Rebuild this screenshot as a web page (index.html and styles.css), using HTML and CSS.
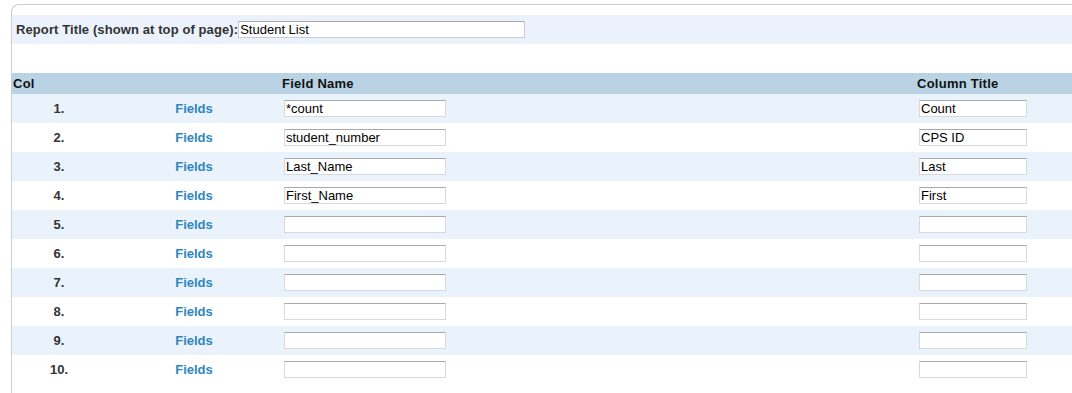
FILE: index.html
```html
<!DOCTYPE html>
<html>
<head>
<meta charset="utf-8">
<link rel="stylesheet" href="styles.css">
</head>
<body>
<div class="box">
  <div class="title-row">
    <span class="title-label">Report Title (shown at top of page):</span><input class="title-input" type="text" value="Student List">
  </div>
  <div class="spacer"></div>
  <div class="grid">
    <div class="row head">
      <div class="c1 hl">Col</div>
      <div class="c2"></div>
      <div class="c3">Field Name</div>
      <div class="c4">Column Title</div>
    </div>
    <div class="row odd"><div class="c1">1.</div><div class="c2"><a class="lnk">Fields</a></div><div class="c3"><input class="fin" value="*count"></div><div class="c4"><input class="tin" value="Count"></div></div>
    <div class="row"><div class="c1">2.</div><div class="c2"><a class="lnk">Fields</a></div><div class="c3"><input class="fin" value="student_number"></div><div class="c4"><input class="tin" value="CPS ID"></div></div>
    <div class="row odd"><div class="c1">3.</div><div class="c2"><a class="lnk">Fields</a></div><div class="c3"><input class="fin" value="Last_Name"></div><div class="c4"><input class="tin" value="Last"></div></div>
    <div class="row"><div class="c1">4.</div><div class="c2"><a class="lnk">Fields</a></div><div class="c3"><input class="fin" value="First_Name"></div><div class="c4"><input class="tin" value="First"></div></div>
    <div class="row odd"><div class="c1">5.</div><div class="c2"><a class="lnk">Fields</a></div><div class="c3"><input class="fin" value=""></div><div class="c4"><input class="tin" value=""></div></div>
    <div class="row"><div class="c1">6.</div><div class="c2"><a class="lnk">Fields</a></div><div class="c3"><input class="fin" value=""></div><div class="c4"><input class="tin" value=""></div></div>
    <div class="row odd"><div class="c1">7.</div><div class="c2"><a class="lnk">Fields</a></div><div class="c3"><input class="fin" value=""></div><div class="c4"><input class="tin" value=""></div></div>
    <div class="row"><div class="c1">8.</div><div class="c2"><a class="lnk">Fields</a></div><div class="c3"><input class="fin" value=""></div><div class="c4"><input class="tin" value=""></div></div>
    <div class="row odd"><div class="c1">9.</div><div class="c2"><a class="lnk">Fields</a></div><div class="c3"><input class="fin" value=""></div><div class="c4"><input class="tin" value=""></div></div>
    <div class="row"><div class="c1">10.</div><div class="c2"><a class="lnk">Fields</a></div><div class="c3"><input class="fin" value=""></div><div class="c4"><input class="tin" value=""></div></div>
  </div>
</div>
</body>
</html>
```
FILE: styles.css
```css
html, body {
  margin: 0;
  padding: 0;
  background: #fff;
  font-family: "Liberation Sans", Arial, sans-serif;
  font-size: 13px;
  color: #333;
  overflow: hidden;
}
.box {
  box-sizing: border-box;
  margin: 4px 0 0 11px;
  border-top: 1px solid #cfcfcf;
  border-left: 1px solid #cfcfcf;
  border-top-left-radius: 8px;
  padding-top: 10px;
  height: 389px;
}
.title-row {
  height: 29px;
  background: #ebf2fc;
  display: flex;
  align-items: center;
  padding-left: 4px;
}
.title-label {
  font-weight: bold;
  color: #333;
  letter-spacing: 0.1px;
}
.title-input {
  box-sizing: border-box;
  width: 287px;
  height: 17px;
  margin: 0;
  padding: 0 1px;
  border: 1px solid #c8ccd2;
  border-top-color: #a9a9a9;
  background: #fff;
  font-family: "Liberation Sans", Arial, sans-serif;
  font-size: 13px;
  color: #000;
  outline: none;
}
.spacer {
  height: 29px;
}
.row {
  display: grid;
  grid-template-columns: 94px 176px 635px 1fr;
  height: 29px;
  align-items: center;
  font-weight: bold;
}
.row.odd {
  background: #eaf2fc;
}
.row.head {
  height: 21px;
  background: #b9d3e5;
  color: #111;
  letter-spacing: 0.25px;
}
.c1 {
  text-align: center;
}
.c1.hl {
  text-align: left;
  padding-left: 1px;
}
.c2 {
  text-align: center;
}
.lnk {
  color: #2e86c1;
  text-decoration: none;
}
.fin, .tin {
  box-sizing: border-box;
  height: 17px;
  margin: 0 0 0 2px;
  padding: 0 1px;
  border: 1px solid #d6dae0;
  border-top-color: #a9a9a9;
  background: #fff;
  font-family: "Liberation Sans", Arial, sans-serif;
  font-size: 13px;
  color: #000;
  outline: none;
  display: block;
}
.fin {
  width: 162px;
}
.tin {
  width: 108px;
}
```
